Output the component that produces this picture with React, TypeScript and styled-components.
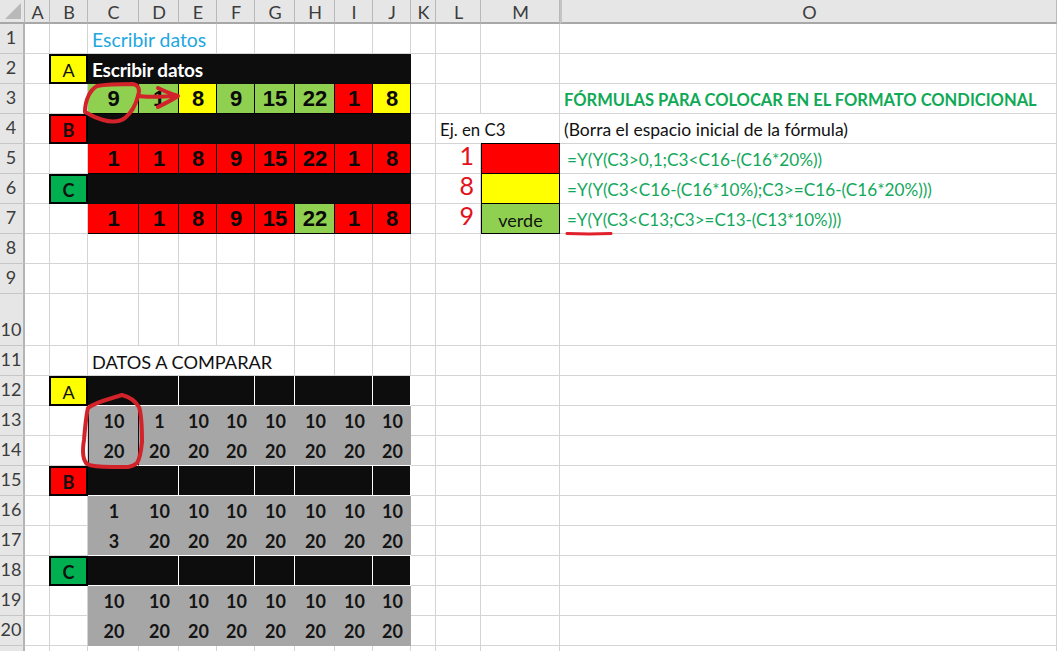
import React from "react";
import styled, { createGlobalStyle } from "styled-components";

const Global = createGlobalStyle`
  html, body { margin: 0; padding: 0; background: #fff; overflow: hidden; }
  #root { width: 1057px; height: 651px; overflow: hidden; }
`;

const Page = styled.div`
  position: relative;
  width: 1057px;
  height: 651px;
  overflow: hidden;
  font-family: Lato, "Liberation Sans", sans-serif;
`;

const Sheet = styled.div`
  display: grid;
  grid-template-columns: 25px 25px 38px 51px 40px 38px 38px 40px 40px 38px 38px 25px 45px 79px 497px;
  grid-template-rows: 24px repeat(9, 30px) 52px repeat(10, 30px) 30px;
`;

const Corner = styled.div`
  position: relative;
  background: #e6e6e6;
  box-sizing: border-box;
  border-right: 1px solid #b4b4b4;
  border-bottom: 2px solid #a8a8a8;
  &::after {
    content: "";
    position: absolute;
    right: 3px;
    bottom: 3px;
    border-style: solid;
    border-width: 0 0 16px 16px;
    border-color: transparent transparent #b9b9b9 transparent;
  }
`;

const ColHead = styled.div<{ $hidden?: boolean }>`
  display: flex;
  align-items: center;
  justify-content: center;
  background: #e6e6e6;
  box-sizing: border-box;
  border-right: 1px solid #b9b9b9;
  border-bottom: 2px solid #a8a8a8;
  border-left: ${(p) => (p.$hidden ? "2px solid #c4c4c4" : "0")};
  color: #3c3c3c;
  font-size: 18px;
  padding-top: 1px;
  padding-left: 1px;
`;

const RowHead = styled.div`
  display: flex;
  align-items: flex-end;
  justify-content: center;
  background: #e6e6e6;
  box-sizing: border-box;
  border-right: 2px solid #b4b4b4;
  border-bottom: 1px solid #c6c6c6;
  color: #3c3c3c;
  font-size: 18px;
  line-height: 32px;
  padding-right: 1px;
`;

const Blank = styled.div`
  box-sizing: border-box;
  border-right: 1px solid #d4d4d4;
  border-bottom: 1px solid #d4d4d4;
  background: #fff;
`;

const TextCell = styled(Blank)<{ $span?: number; $color?: string; $bold?: boolean; $size?: number; $pad?: number }>`
  grid-column: span ${(p) => p.$span ?? 1};
  display: flex;
  align-items: center;
  white-space: nowrap;
  padding-left: ${(p) => p.$pad ?? 4}px;
  padding-top: 2px;
  color: ${(p) => p.$color ?? "#111"};
  font-weight: ${(p) => (p.$bold ? 700 : 400)};
  font-size: ${(p) => p.$size ?? 17}px;
`;

const Band = styled.div<{ $span?: number; $split?: boolean }>`
  grid-column: span ${(p) => p.$span ?? 1};
  display: flex;
  align-items: center;
  box-sizing: border-box;
  background: #0d0d0d;
  color: #fff;
  font-weight: 700;
  font-size: 19px;
  letter-spacing: -0.2px;
  padding-left: 4px;
  padding-top: 1px;
  white-space: nowrap;
  border-right: ${(p) => (p.$split ? "1px solid #fff" : "0")};
  border-bottom: ${(p) => (p.$split ? "1px solid #fff" : "0")};
`;

const Tag = styled.div<{ $bg: string; $bold?: boolean }>`
  display: flex;
  align-items: center;
  justify-content: center;
  box-sizing: border-box;
  margin-left: -1px;
  border: 2px solid #000;
  padding-top: 2px;
  background: ${(p) => p.$bg};
  color: #111;
  font-size: 18px;
  font-weight: ${(p) => (p.$bold ? 700 : 400)};
`;

const Score = styled.div<{ $bg: string }>`
  display: flex;
  align-items: center;
  justify-content: center;
  box-sizing: border-box;
  border-right: 1px solid #000;
  border-bottom: 1px solid #000;
  background: ${(p) => p.$bg};
  color: #0a0a0a;
  font-family: "Liberation Sans", Arial, sans-serif;
  font-weight: 700;
  font-size: 22px;
  padding-left: 1px;
`;

const Compare = styled.div<{ $boxed?: boolean; $end?: boolean }>`
  display: flex;
  align-items: center;
  justify-content: center;
  box-sizing: border-box;
  background: #a6a6a6;
  color: #141414;
  font-weight: 700;
  font-size: 18px;
  padding-left: 1px;
  border-left: ${(p) => (p.$boxed ? "1px solid #111" : "0")};
  border-right: ${(p) => (p.$boxed ? "1px solid #111" : "0")};
  border-bottom: ${(p) => (p.$end ? "1px solid #fff" : "0")};
`;

const BigDigit = styled(Blank)`
  display: flex;
  align-items: center;
  justify-content: flex-end;
  color: #e3121a;
  font-size: 25px;
  line-height: 20px;
  padding-right: 6px;
  padding-bottom: 7px;
`;

const Swatch = styled.div<{ $bg: string }>`
  display: flex;
  align-items: center;
  justify-content: center;
  box-sizing: border-box;
  border: 1px solid #000;
  margin-top: -1px;
  padding-top: 2px;
  background: ${(p) => p.$bg};
  color: #111;
  font-size: 18px;
`;

const Ink = styled.svg`
  position: absolute;
  inset: 0;
  pointer-events: none;
`;

const RED = "#ff0000";
const LIME = "#8fd050";
const YELLOW = "#ffff00";
const KELLY = "#00b050";
const FORMULA = "#12a85c";

const cols = ["A", "B", "C", "D", "E", "F", "G", "H", "I", "J", "K", "L", "M", "O"];
const values = [1, 1, 8, 9, 15, 22, 1, 8];

const blanks = (n: number) => Array.from({ length: n }, (_, i) => <Blank key={`b${i}`} />);

const Scores = ({ items }: { items: [number, string][] }) => (
  <>
    {items.map(([v, bg], i) => (
      <Score key={i} $bg={bg}>{v}</Score>
    ))}
  </>
);

const CompareRow = ({ items, boxed, end }: { items: number[]; boxed?: boolean; end?: boolean }) => (
  <>
    {items.map((v, i) => (
      <Compare key={i} $boxed={boxed && i === 0} $end={end}>{v}</Compare>
    ))}
  </>
);

const SplitBand = () => (
  <>
    <Band $span={2} $split />
    <Band $span={2} $split />
    <Band $split />
    <Band $span={2} $split />
    <Band $split />
  </>
);

const tail = (o?: React.ReactNode) => (
  <>
    {blanks(3)}
    {o ?? <Blank />}
  </>
);

const tens = Array(8).fill(10) as number[];
const twenties = Array(8).fill(20) as number[];

export default function App() {
  return (
    <Page>
      <Global />
      <Sheet>
        <Corner />
        {cols.map((c) => (
          <ColHead key={c} $hidden={c === "O"}>{c}</ColHead>
        ))}

        <RowHead>1</RowHead>
        {blanks(2)}
        <TextCell $span={3} $color="#22a7df" $size={19.4}>Escribir datos</TextCell>
        {blanks(5)}
        {tail()}

        <RowHead>2</RowHead>
        <Blank />
        <Tag $bg={YELLOW}>A</Tag>
        <Band $span={8}>Escribir datos</Band>
        {tail()}

        <RowHead>3</RowHead>
        {blanks(2)}
        <Scores items={[[9, LIME], [1, LIME], [8, YELLOW], [9, LIME], [15, LIME], [22, LIME], [1, RED], [8, YELLOW]]} />
        {tail(<TextCell $color="#10a956" $bold $size={16.5}>FÓRMULAS PARA COLOCAR EN EL FORMATO CONDICIONAL</TextCell>)}

        <RowHead>4</RowHead>
        <Blank />
        <Tag $bg={RED} $bold>B</Tag>
        <Band $span={8} />
        <Blank />
        <TextCell $span={2} $size={16.8}>Ej. en C3</TextCell>
        <TextCell $size={17.5}>(Borra el espacio inicial de la fórmula)</TextCell>

        <RowHead>5</RowHead>
        {blanks(2)}
        <Scores items={values.map((v) => [v, RED] as [number, string])} />
        <Blank />
        <BigDigit>1</BigDigit>
        <Swatch $bg={RED} />
        <TextCell $color={FORMULA} $size={17.2} $pad={7}>=Y(Y(C3&gt;0,1;C3&lt;C16-(C16*20%))</TextCell>

        <RowHead>6</RowHead>
        <Blank />
        <Tag $bg={KELLY} $bold>C</Tag>
        <Band $span={8} />
        <Blank />
        <BigDigit>8</BigDigit>
        <Swatch $bg={YELLOW} />
        <TextCell $color={FORMULA} $size={17.2} $pad={7}>=Y(Y(C3&lt;C16-(C16*10%);C3&gt;=C16-(C16*20%)))</TextCell>

        <RowHead>7</RowHead>
        {blanks(2)}
        <Scores items={values.map((v, i) => [v, i === 5 ? LIME : RED] as [number, string])} />
        <Blank />
        <BigDigit>9</BigDigit>
        <Swatch $bg={LIME}>verde</Swatch>
        <TextCell $color={FORMULA} $size={17} $pad={7}>=Y(Y(C3&lt;C13;C3&gt;=C13-(C13*10%)))</TextCell>

        {[8, 9, 10].map((n) => (
          <React.Fragment key={n}>
            <RowHead>{n}</RowHead>
            {blanks(14)}
          </React.Fragment>
        ))}

        <RowHead>11</RowHead>
        {blanks(2)}
        <TextCell $span={5} $size={18.2}>DATOS A COMPARAR</TextCell>
        {blanks(3)}
        {tail()}

        <RowHead>12</RowHead>
        <Blank />
        <Tag $bg={YELLOW}>A</Tag>
        <SplitBand />
        {tail()}

        <RowHead>13</RowHead>
        {blanks(2)}
        <CompareRow items={[10, 1, 10, 10, 10, 10, 10, 10]} boxed />
        {tail()}

        <RowHead>14</RowHead>
        {blanks(2)}
        <CompareRow items={twenties} boxed end />
        {tail()}

        <RowHead>15</RowHead>
        <Blank />
        <Tag $bg={RED} $bold>B</Tag>
        <SplitBand />
        {tail()}

        <RowHead>16</RowHead>
        {blanks(2)}
        <CompareRow items={[1, 10, 10, 10, 10, 10, 10, 10]} />
        {tail()}

        <RowHead>17</RowHead>
        {blanks(2)}
        <CompareRow items={[3, 20, 20, 20, 20, 20, 20, 20]} end />
        {tail()}

        <RowHead>18</RowHead>
        <Blank />
        <Tag $bg={KELLY} $bold>C</Tag>
        <SplitBand />
        {tail()}

        <RowHead>19</RowHead>
        {blanks(2)}
        <CompareRow items={tens} />
        {tail()}

        <RowHead>20</RowHead>
        {blanks(2)}
        <CompareRow items={twenties} />
        {tail()}

        <RowHead />
        {blanks(14)}
      </Sheet>

      <Ink width="1057" height="651" viewBox="0 0 1057 651" fill="none" stroke="#d2232a" strokeWidth="4" strokeLinecap="round" strokeLinejoin="round">
        <path d="M85 112 C85 100 90 90 97 86 C108 84 125 84 133 84 C139 85 140 90 138 96 C136 104 131 113 125 118 C119 122 110 122 103 120 C96 118 90 115 85 112" />
        <path d="M138 96 C150 98 165 96 177 96 M158 88 C164 91 172 94 178 96 C172 100 164 104 158 107" />
        <path d="M88 408 C95 402 110 399 122 395 C130 397 136 402 139 407 C142 416 142 430 142 442 C141 452 139 460 137 463 C132 468 125 467 112 467 C102 467 93 467 87 464 C83 460 82 452 84 440 C85 428 86 416 88 408 Z" />
        <path d="M567 233.5 C582 234 597 234 611 233.5" stroke="#e0202a" strokeWidth="3" />
      </Ink>
    </Page>
  );
}
